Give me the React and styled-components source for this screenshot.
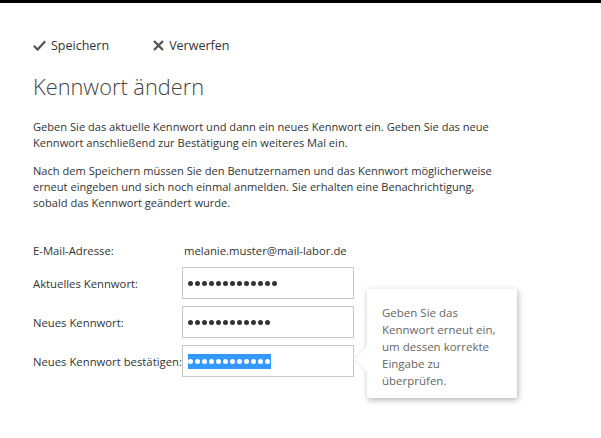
import styled, { createGlobalStyle } from 'styled-components'

const GlobalStyle = createGlobalStyle`
  body {
    margin: 0;
    background: #fff;
    font-family: "Open Sans", "Noto Sans", sans-serif;
    color: #333;
  }
`

// schwarzer Balken oben
const TopBar = styled.div`
  height: 3px;
  background: #000;
`

const Page = styled.div`
  padding: 32px 0 60px 33px;
`

const Toolbar = styled.div`
  display: flex;
  align-items: center;
  gap: 44px;
  height: 20px;
`

const ToolButton = styled.div`
  display: flex;
  align-items: center;
  gap: 5px;
  font-size: 12.5px;
  color: #333;
  cursor: pointer;
  svg {
    display: block;
  }
`

const Title = styled.h1`
  margin: 16px 0 0;
  font-size: 21.8px;
  font-weight: 300;
  line-height: 32px;
  color: #444;
`

const Text = styled.p`
  margin: ${(p) => p.$top}px 0 0;
  font-size: 11.1px;
  line-height: 16px;
  color: #333;
`

// Formular
const Form = styled.div`
  position: relative;
  margin-top: 29px;
  display: grid;
  grid-template-columns: 149px 172px;
  grid-template-rows: 20px repeat(3, 32px);
  row-gap: 7px;
`

const Label = styled.div`
  display: flex;
  align-items: center;
  font-size: 11.3px;
  color: #333;
  white-space: nowrap;
`

const Value = styled.div`
  display: flex;
  align-items: center;
  padding-left: 2px;
  font-size: 11.3px;
  color: #333;
`

const Field = styled.div`
  box-sizing: border-box;
  height: 32px;
  border: 1px solid #c8c8c8;
  background: #fff;
  display: flex;
  align-items: center;
  padding-left: 5px;
`

const Dots = styled.span`
  display: inline-flex;
  align-items: center;
  gap: 2px;
  height: 15px;
  padding-right: ${(p) => (p.$selected ? 1 : 0)}px;
  background: ${(p) => (p.$selected ? '#3399ff' : 'transparent')};
`

const Dot = styled.span`
  width: 5px;
  height: 5px;
  border-radius: 50%;
  background: ${(p) => (p.$selected ? '#fff' : '#333')};
`

// Hinweis rechts neben dem Feld
const Tooltip = styled.div`
  position: absolute;
  left: 334px;
  top: 49px;
  width: 150px;
  height: 109px;
  box-sizing: border-box;
  padding: 15px 0 0 15px;
  background: #fff;
  box-shadow: 1px 2px 6px rgba(0, 0, 0, 0.3);
  font-size: 11.5px;
  line-height: 17px;
  color: #666;

  &::before {
    content: '';
    position: absolute;
    left: -14px;
    top: 56px;
    border-style: solid;
    border-width: 14px 14px 14px 0;
    border-color: transparent #e4e4e4 transparent transparent;
  }
  &::after {
    content: '';
    position: absolute;
    left: -13px;
    top: 56px;
    border-style: solid;
    border-width: 14px 14px 14px 0;
    border-color: transparent #fff transparent transparent;
  }
`

const Check = () => (
  <svg width="13" height="11" viewBox="0 0 13 11">
    <path d="M0.8 5.8 L4.6 9.6 L12.2 1.2" fill="none" stroke="#555" strokeWidth="2.2" />
  </svg>
)

const Cross = () => (
  <svg width="11" height="11" viewBox="0 0 11 11">
    <path d="M1 1 L10 10 M10 1 L1 10" fill="none" stroke="#555" strokeWidth="2.4" />
  </svg>
)

const Password = ({ count, selected }) => (
  <Field>
    <Dots $selected={selected}>
      {Array.from({ length: count }).map((_, i) => (
        <Dot key={i} $selected={selected} />
      ))}
    </Dots>
  </Field>
)

const App = () => {
  return (
    <>
      <GlobalStyle />
      <TopBar />
      <Page>
        <Toolbar>
          <ToolButton>
            <Check />
            Speichern
          </ToolButton>
          <ToolButton>
            <Cross />
            Verwerfen
          </ToolButton>
        </Toolbar>
        <Title>Kennwort ändern</Title>
        <Text $top={16}>
          Geben Sie das aktuelle Kennwort und dann ein neues Kennwort ein. Geben Sie das neue
          <br />
          Kennwort anschließend zur Bestätigung ein weiteres Mal ein.
        </Text>
        <Text $top={12}>
          Nach dem Speichern müssen Sie den Benutzernamen und das Kennwort möglicherweise
          <br />
          erneut eingeben und sich noch einmal anmelden. Sie erhalten eine Benachrichtigung,
          <br />
          sobald das Kennwort geändert wurde.
        </Text>
        <Form>
          <Label>E-Mail-Adresse:</Label>
          <Value>melanie.muster@mail-labor.de</Value>
          <Label>Aktuelles Kennwort:</Label>
          <Password count={13} />
          <Label>Neues Kennwort:</Label>
          <Password count={12} />
          <Label>Neues Kennwort bestätigen:</Label>
          <Password count={12} selected />
          <Tooltip>
            Geben Sie das
            <br />
            Kennwort erneut ein,
            <br />
            um dessen korrekte
            <br />
            Eingabe zu
            <br />
            überprüfen.
          </Tooltip>
        </Form>
      </Page>
    </>
  )
}

export default App
